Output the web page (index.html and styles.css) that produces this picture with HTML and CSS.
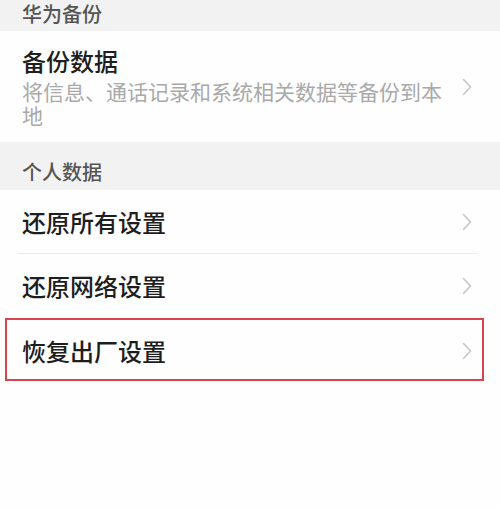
FILE: index.html
```html
<!DOCTYPE html>
<html lang="zh-CN">
<head>
<meta charset="utf-8">
<title>备份与重置</title>
<link rel="stylesheet" href="styles.css">
</head>
<body>
<div class="page">
  <div class="group-title group-title-top">华为备份</div>
  <div class="item item-backup">
    <div class="item-text">
      <div class="item-name">备份数据</div>
      <div class="item-desc">将信息、通话记录和系统相关数据等备份到本地</div>
    </div>
    <svg class="chevron" viewBox="0 0 10 18" width="10" height="18"><polyline points="1.5,1.5 8.5,9 1.5,16.5"/></svg>
  </div>
  <div class="group-title">个人数据</div>
  <div class="list">
    <div class="item row row-first">
      <div class="item-name">还原所有设置</div>
      <svg class="chevron" viewBox="0 0 10 18" width="10" height="18"><polyline points="1.5,1.5 8.5,9 1.5,16.5"/></svg>
    </div>
    <div class="divider"></div>
    <div class="item row">
      <div class="item-name">还原网络设置</div>
      <svg class="chevron" viewBox="0 0 10 18" width="10" height="18"><polyline points="1.5,1.5 8.5,9 1.5,16.5"/></svg>
    </div>
    <div class="highlight">
      <div class="item row row-boxed">
        <div class="item-name">恢复出厂设置</div>
        <svg class="chevron" viewBox="0 0 10 18" width="10" height="18"><polyline points="1.5,1.5 8.5,9 1.5,16.5"/></svg>
      </div>
    </div>
  </div>
</div>
</body>
</html>
```
FILE: styles.css
```css
html, body {
  margin: 0;
  padding: 0;
  background: #fefefe;
}
.page {
  width: 500px;
  min-height: 508px;
  font-family: "Noto Sans CJK SC", "Noto Sans", sans-serif;
  background: #fefefe;
}
.group-title {
  background: #f2f2f2;
  color: #555555;
  font-size: 20px;
  font-weight: 500;
  line-height: 24px;
  padding: 18px 22px 6px;
}
.group-title-top {
  height: 31px;
  box-sizing: border-box;
  padding: 2px 22px 5px;
}
.item {
  display: flex;
  align-items: center;
  padding: 0 28px 0 22px;
}
.item-backup {
  padding-top: 15px;
  padding-bottom: 15px;
  gap: 12px;
}
.item-text {
  flex: 1;
  min-width: 0;
}
.item-name {
  flex: 1;
  color: #1e1e1e;
  font-size: 24px;
  font-weight: 500;
  line-height: 30px;
}
.item-desc {
  margin-top: 3px;
  color: #a9a9a9;
  font-size: 21px;
  line-height: 24px;
}
.chevron {
  flex: none;
  fill: none;
  stroke: #c6c6c6;
  stroke-width: 1.6;
  stroke-linecap: round;
  stroke-linejoin: round;
}
.row {
  height: 64px;
  box-sizing: border-box;
}
.row-first {
  height: 63px;
}
.divider {
  height: 1px;
  background: #ebebeb;
  margin: 0 23px 0 18px;
}
.highlight {
  margin: 0 16px 0 5px;
  border: 2px solid #d8434d;
}
.row-boxed {
  height: 59px;
  padding: 3px 10px 0 15px;
}
```
